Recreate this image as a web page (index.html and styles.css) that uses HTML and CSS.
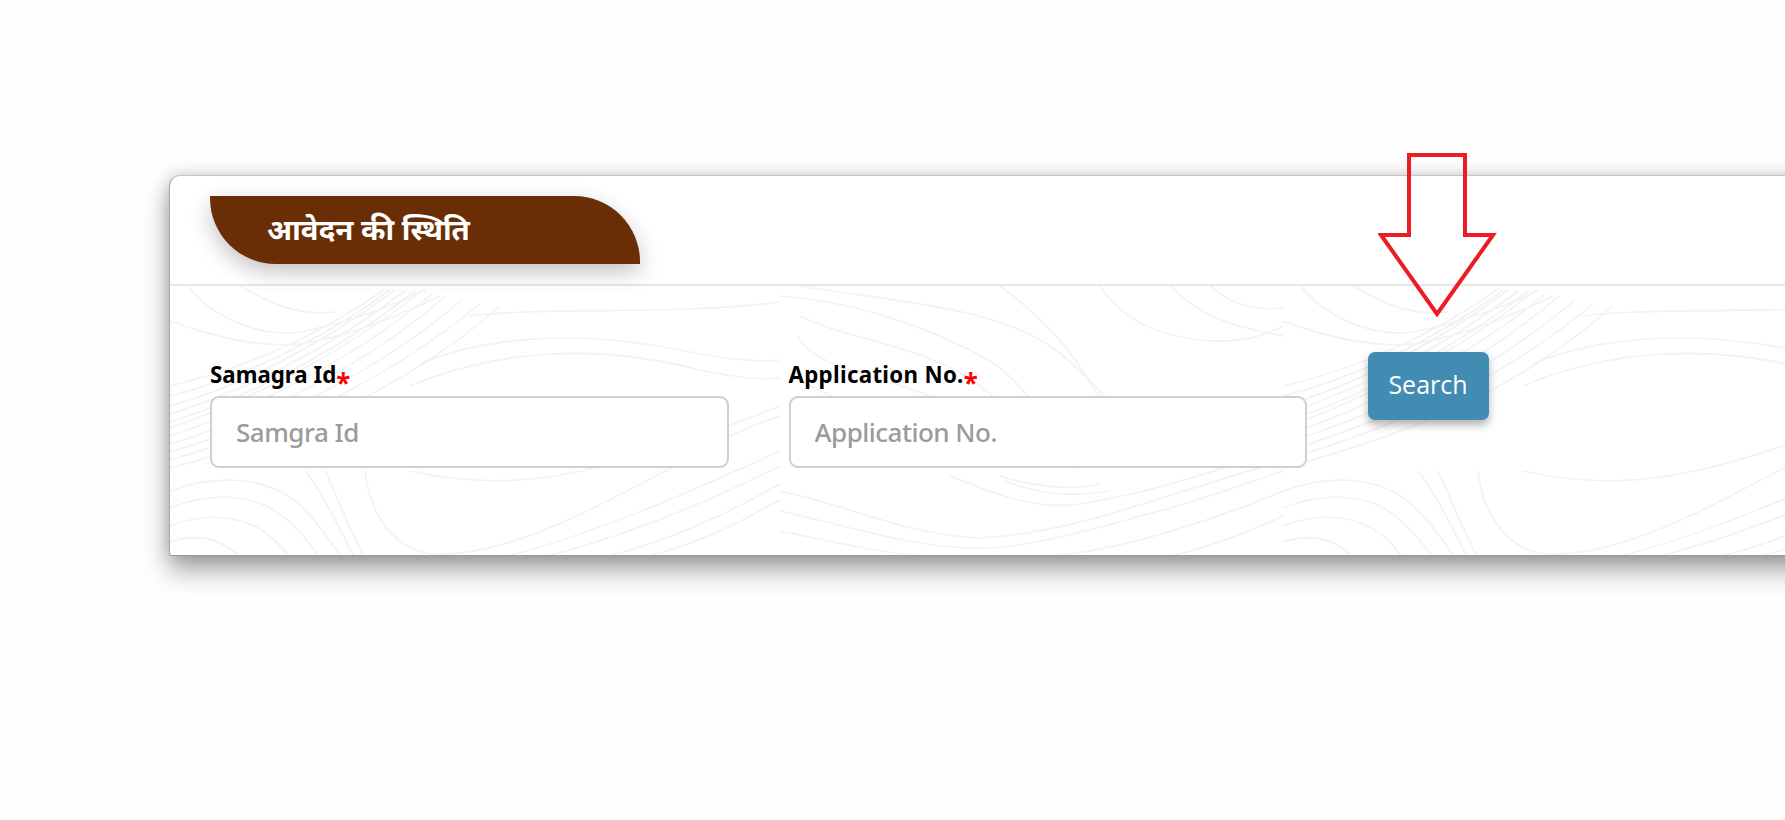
FILE: index.html
```html
<!DOCTYPE html>
<html lang="hi">
<head>
<meta charset="utf-8">
<title>आवेदन की स्थिति</title>
<link rel="stylesheet" href="styles.css">
</head>
<body>
<main class="page">
  <section class="card">
    <header class="card-head">
      <h1 class="tab">आवेदन की स्थिति</h1>
    </header>
    <div class="card-body">
      <svg class="texture" viewBox="0 0 1640 270" width="1640" height="270" aria-hidden="true">
        <defs>
          <g id="tile" fill="none" stroke="#f2f2f2" stroke-width="1.6">
            <path d="M0 100C70 84 150 50 215 3"/><path d="M0 110C70 92 150 56 220 4"/>
            <path d="M0 120C70 100 150 60 225 4"/><path d="M0 128C70 106 155 66 235 5"/>
            <path d="M0 136C70 114 165 68 245 5"/><path d="M0 142C70 118 170 70 250 6"/>
            <path d="M0 150C80 124 180 76 262 8"/><path d="M0 158C90 130 190 84 276 10"/>
            <path d="M0 166C100 136 200 92 292 14"/><path d="M0 174C110 142 210 100 310 18"/>
            <path d="M0 182C120 150 230 108 330 20"/>
            <path d="M18 0C40 30 90 52 130 46C170 38 215 24 255 4"/>
            <path d="M70 0C100 18 130 30 165 26"/>
            <path d="M0 35C40 50 90 62 130 58C170 52 220 34 270 10"/>
            <path d="M250 78C320 48 420 44 520 66C560 74 590 76 610 74"/>
            <path d="M240 100C330 62 430 58 530 84C570 92 590 94 610 92"/>
            <path d="M300 30C380 20 500 30 610 16"/>
            <path d="M0 205C40 190 90 188 125 215C145 232 160 255 172 272"/>
            <path d="M0 222C40 206 85 206 115 232C130 245 142 260 150 272"/>
            <path d="M0 240C30 228 70 226 100 250C108 256 114 264 120 272"/>
            <path d="M0 256C25 248 50 250 70 272"/>
            <path d="M135 185C155 210 170 245 185 272"/>
            <path d="M155 185C165 205 180 245 195 272"/>
            <path d="M195 185C198 215 215 262 262 268C340 272 430 220 560 150C580 140 595 135 610 130"/>
            <path d="M240 185C300 198 360 200 440 178C490 165 560 140 610 120"/>
            <path d="M330 272C420 250 520 206 610 165"/>
            <path d="M370 272C450 252 530 220 610 180"/>
            <path d="M430 272C500 256 560 226 610 198"/>
            <path d="M470 272C530 258 570 236 610 214"/>
            <path d="M610 10C680 15 760 40 820 75C860 100 880 150 925 180"/>
            <path d="M630 30C680 55 760 60 810 100C850 130 880 170 910 182"/>
            <path d="M628 50C640 80 710 90 760 110C800 125 830 165 850 180"/>
            <path d="M618 90C650 105 700 120 730 180"/>
            <path d="M630 0C720 15 820 20 880 60C930 95 960 150 1010 170"/>
            <path d="M830 0C870 30 900 60 925 105C950 135 1000 120 1113 140"/>
            <path d="M930 0C950 30 980 50 1040 55C1070 56 1090 52 1113 40"/>
            <path d="M1000 0C1030 30 1060 40 1113 50"/>
            <path d="M1040 0C1060 18 1085 25 1113 22"/>
            <path d="M610 205C680 220 740 250 810 252C850 250 900 240 950 225C1000 210 1060 190 1113 175"/>
            <path d="M610 225C680 240 750 265 820 262C880 258 950 235 1000 222C1050 208 1080 196 1113 185"/>
            <path d="M610 245C660 255 700 265 750 270"/>
            <path d="M780 190C820 205 860 225 910 218C960 210 1040 190 1113 160"/>
            <path d="M830 190C860 200 900 205 930 198"/>
            <path d="M835 195C870 208 900 212 940 205"/>
            <path d="M880 270C950 265 1050 232 1113 205"/>
            <path d="M1000 270C1040 262 1080 245 1113 230"/>
          </g>
        </defs>
        <use href="#tile"/>
        <use href="#tile" x="1113"/>
      </svg>
      <div class="field">
        <label class="label" for="samagra">Samagra Id<span class="req">*</span></label>
        <input class="input" id="samagra" type="text" placeholder="Samgra Id">
      </div>
      <div class="field">
        <label class="label label-wide" for="appno">Application No.<span class="req">*</span></label>
        <input class="input" id="appno" type="text" placeholder="Application No.">
      </div>
      <div class="action">
        <button class="btn" type="button">Search</button>
      </div>
    </div>
  </section>
  <svg class="arrow" viewBox="0 0 120 166" width="120" height="166" aria-hidden="true">
    <path d="M31 3H87V83H115L59 162L3 83H31Z"/>
  </svg>
</main>
</body>
</html>
```

FILE: styles.css
```css
* { box-sizing: border-box; }
html, body { margin: 0; height: 100%; background: #fefefe; overflow: hidden; }
.page {
  position: relative;
  width: 1785px;
  height: 820px;
  padding: 175px 0 0 168.5px;
  overflow: hidden;
  font-family: "Noto Sans", "Open Sans", sans-serif;
}
.card {
  width: 1800px;
  height: 381px;
  background: #fff;
  border: 1.5px solid #c4c4c4;
  border-right: 0;
  border-bottom-color: #9a9a9a;
  border-left-color: #a8a8a8;
  border-radius: 11px 0 0 3px;
  box-shadow: 0 14px 26px rgba(0, 0, 0, .36), 0 0 16px rgba(0, 0, 0, .16);
}
.card-head {
  height: 110px;
  padding: 20px 0 0 40.5px;
  border-bottom: 2px solid #e6e6e6;
}
.tab {
  width: 430px;
  height: 68px;
  margin: 0;
  padding: 0 0 3px 57px;
  display: flex;
  align-items: center;
  background: #6a2e07;
  color: #fff;
  font-size: 29.5px;
  font-weight: 700;
  border-radius: 0 66px 0 66px;
  box-shadow: 0 8px 22px rgba(0, 0, 0, .24);
}
.card-body {
  position: relative;
  height: 269px;
  padding: 66px 0 0 40.5px;
  display: grid;
  grid-template-columns: 578.5px 579px 200px;
  align-items: start;
  overflow: hidden;
}
.texture { position: absolute; left: 0; top: 0; }
.field, .action { position: relative; }
.field { width: 518.5px; }
.label {
  display: block;
  height: 44px;
  padding-top: 10px;
  color: #000;
  font-size: 22.3px;
  font-weight: 700;
  line-height: 26px;
  white-space: nowrap;
}
.label-wide { letter-spacing: .3px; }
.req {
  color: #f00;
  font-size: 26px;
  line-height: 0;
  vertical-align: -10px;
}
.input {
  display: block;
  width: 100%;
  height: 72px;
  padding: 0 24px;
  font: 500 26px "Noto Sans", "Open Sans", sans-serif;
  letter-spacing: -.5px;
  background: #fff;
  border: 2px solid #cfcfcf;
  border-radius: 9px;
  outline: none;
}
.input::placeholder { color: #9b9b9b; opacity: 1; }
.btn {
  display: block;
  width: 121px;
  height: 68px;
  padding: 0 0 4px;
  background: #428bb3;
  color: #fff;
  font: 400 25px "Open Sans", "Noto Sans", sans-serif;
  border: 0;
  border-radius: 7px;
  box-shadow: 0 5px 9px rgba(0, 0, 0, .3);
}
.arrow { position: absolute; left: 1378px; top: 152px; }
.arrow path { fill: none; stroke: #ed1c24; stroke-width: 4; stroke-linejoin: miter; }
```
